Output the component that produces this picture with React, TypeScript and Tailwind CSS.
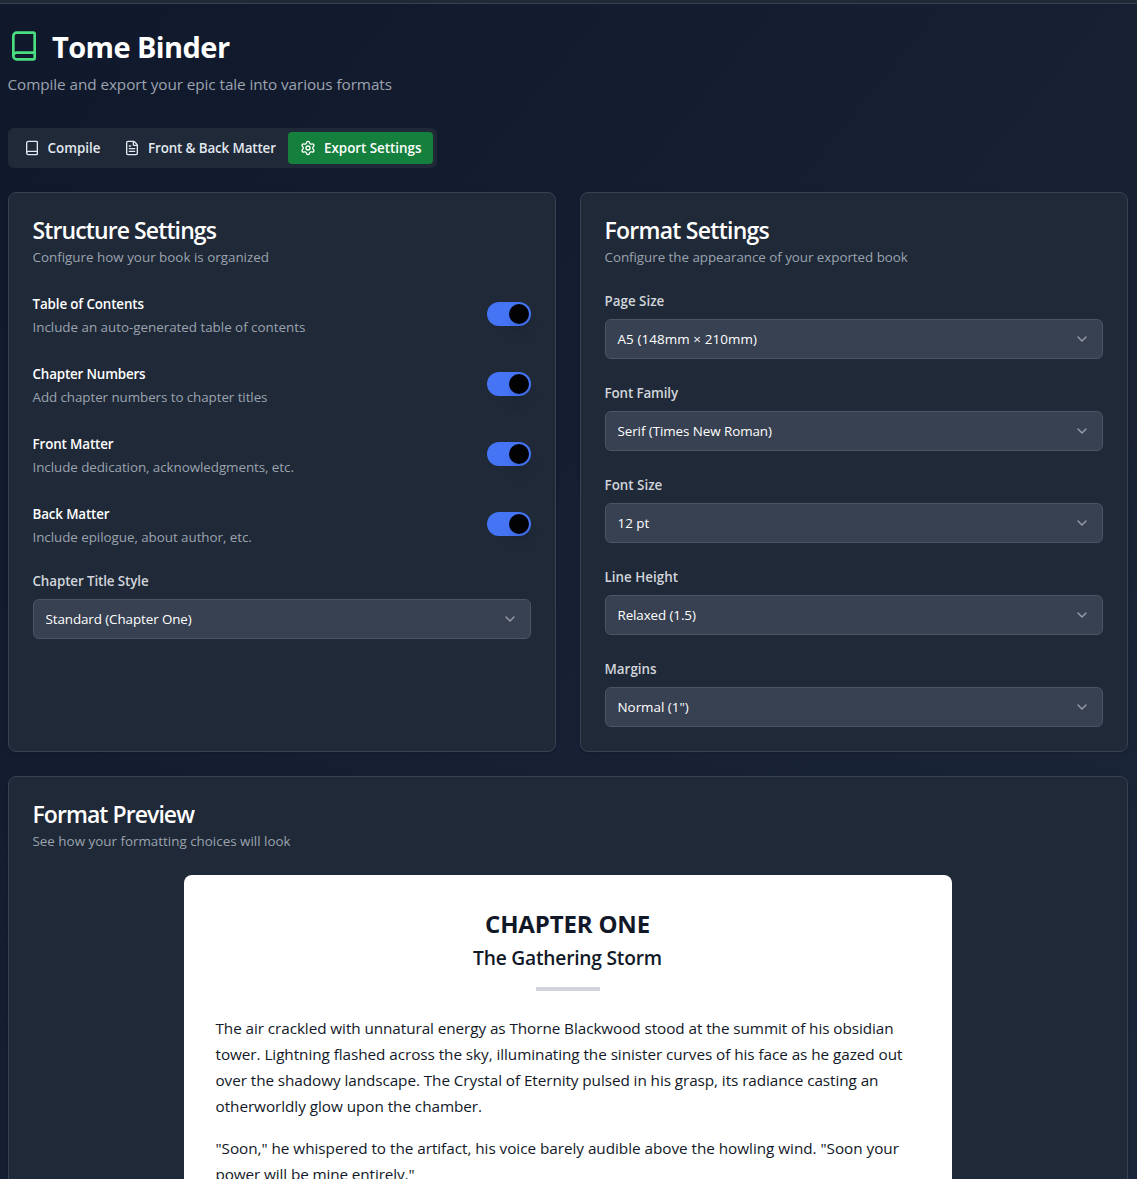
import type { ReactNode } from "react";
import { Book, ChevronDown, FileText, Settings } from "lucide-react";

type Item = { text: string; tracking: string };
type ToggleItem = { label: Item; hint: Item };
type SelectItem = { label: Item; value: Item };

const toggles: ToggleItem[] = [
  {
    label: { text: "Table of Contents", tracking: "tracking-[-0.13px]" },
    hint: { text: "Include an auto-generated table of contents", tracking: "tracking-[-0.02px]" },
  },
  {
    label: { text: "Chapter Numbers", tracking: "tracking-[-0.17px]" },
    hint: { text: "Add chapter numbers to chapter titles", tracking: "tracking-[-0.076px]" },
  },
  {
    label: { text: "Front Matter", tracking: "tracking-[-0.13px]" },
    hint: { text: "Include dedication, acknowledgments, etc.", tracking: "tracking-[-0.065px]" },
  },
  {
    label: { text: "Back Matter", tracking: "tracking-[-0.15px]" },
    hint: { text: "Include epilogue, about author, etc.", tracking: "tracking-[-0.05px]" },
  },
];

const formatFields: SelectItem[] = [
  {
    label: { text: "Page Size", tracking: "tracking-normal" },
    value: { text: "A5 (148mm × 210mm)", tracking: "tracking-[0.1px]" },
  },
  {
    label: { text: "Font Family", tracking: "tracking-[-0.13px]" },
    value: { text: "Serif (Times New Roman)", tracking: "tracking-[-0.07px]" },
  },
  {
    label: { text: "Font Size", tracking: "tracking-normal" },
    value: { text: "12 pt", tracking: "tracking-normal" },
  },
  {
    label: { text: "Line Height", tracking: "tracking-normal" },
    value: { text: "Relaxed (1.5)", tracking: "tracking-[-0.1px]" },
  },
  {
    label: { text: "Margins", tracking: "tracking-normal" },
    value: { text: 'Normal (1")', tracking: "tracking-normal" },
  },
];

const paragraphs: Item[][] = [
  [
    {
      text: "The air crackled with unnatural energy as Thorne Blackwood stood at the summit of his obsidian",
      tracking: "tracking-[-0.079px]",
    },
    {
      text: "tower. Lightning flashed across the sky, illuminating the sinister curves of his face as he gazed out",
      tracking: "tracking-[-0.062px]",
    },
    {
      text: "over the shadowy landscape. The Crystal of Eternity pulsed in his grasp, its radiance casting an",
      tracking: "tracking-[-0.078px]",
    },
    { text: "otherworldly glow upon the chamber.", tracking: "tracking-[-0.053px]" },
  ],
  [
    {
      text: '"Soon," he whispered to the artifact, his voice barely audible above the howling wind. "Soon your',
      tracking: "tracking-[-0.038px]",
    },
    { text: 'power will be mine entirely."', tracking: "tracking-[-0.114px]" },
  ],
];

function Card({ title, hint, children }: { title: Item; hint: Item; children: ReactNode }) {
  return (
    <section className="rounded-lg border border-[#374151] bg-[#1f2937] p-6 shadow-sm">
      <h2
        className={`-ml-[0.5px] h-6 text-[23px] leading-[27px] font-semibold whitespace-nowrap text-white ${title.tracking}`}
      >
        {title.text}
      </h2>
      <p className={`mt-1.5 -ml-[0.5px] text-[13.4px] leading-5 whitespace-nowrap text-[#9ca3af] ${hint.tracking}`}>
        {hint.text}
      </p>
      <div className="mt-6">{children}</div>
    </section>
  );
}

function Toggle({ label, hint }: ToggleItem) {
  return (
    <div className="flex items-center justify-between">
      <div className="-ml-[0.5px] space-y-0.5">
        <div className={`h-6 text-[13.4px] leading-[26px] font-semibold text-white ${label.tracking}`}>
          {label.text}
        </div>
        <p className={`text-[13.4px] leading-5 text-[#9ca3af] ${hint.tracking}`}>{hint.text}</p>
      </div>
      <button
        role="switch"
        aria-checked="true"
        className="flex h-6 w-11 items-center justify-end rounded-full border-2 border-transparent bg-[#4574f5]"
      >
        <span className="size-5 rounded-full bg-[#020205] shadow-lg" />
      </button>
    </div>
  );
}

function SelectField({ label, value }: SelectItem) {
  return (
    <div>
      <div className={`-ml-[0.5px] text-[13.4px] leading-5 font-semibold text-[#d1d5db] ${label.tracking}`}>
        {label.text}
      </div>
      <button className="mt-2 flex h-10 w-full items-center justify-between rounded-md border border-[#4b5563] bg-[#374151] px-3">
        <span className={`-ml-[0.5px] text-[13.4px] leading-5 text-white ${value.tracking}`}>{value.text}</span>
        <ChevronDown className="size-4 text-white opacity-50" />
      </button>
    </div>
  );
}

export default function App() {
  return (
    <div className="h-[1179px] overflow-hidden bg-[#0f172a] font-['Open_Sans',sans-serif] text-white">
      <div className="h-1 border-b border-[#374151] bg-[#1f2937]" />
      <main className="h-[1400px] bg-linear-to-br from-[#10182b] to-[#1d283c] pt-6 pl-2">
        <header>
          <div className="flex h-9 items-center">
            <Book className="mr-3 size-8 text-[#4ade80]" />
            <h1 className="pt-0.5 text-[29px] leading-9 font-bold tracking-[-0.587px]">Tome Binder</h1>
          </div>
          <p className="mt-2 -ml-[0.5px] text-[15.3px] leading-6 tracking-[-0.078px] text-[#9ca3af]">
            Compile and export your epic tale into various formats
          </p>
        </header>

        <nav className="mt-8 flex h-10 w-[429px] items-center rounded-md bg-[#1f2937] p-1 text-[13.4px] leading-5 font-semibold whitespace-nowrap">
          <button className="flex h-8 w-[100px] items-center rounded-sm px-3 text-[#e2e8f0]">
            <Book className="mr-2 size-4 shrink-0" />
            <span className="-ml-[0.5px]">Compile</span>
          </button>
          <button className="flex h-8 w-[176px] items-center rounded-sm px-3 text-[#e2e8f0]">
            <FileText className="mr-2 size-4 shrink-0" />
            <span className="tracking-[-0.13px]">Front &amp; Back Matter</span>
          </button>
          <button className="flex h-8 w-[145px] items-center rounded-sm bg-[#15803d] px-3 text-white">
            <Settings className="mr-2 size-4 shrink-0" />
            <span className="tracking-[-0.02px]">Export Settings</span>
          </button>
        </nav>

        <div className="mt-6 grid w-[1120px] grid-cols-2 gap-6">
          <Card
            title={{ text: "Structure Settings", tracking: "tracking-[-0.895px]" }}
            hint={{ text: "Configure how your book is organized", tracking: "tracking-normal" }}
          >
            <div className="space-y-6">
              {toggles.map((t) => (
                <Toggle key={t.label.text} {...t} />
              ))}
              <SelectField
                label={{ text: "Chapter Title Style", tracking: "tracking-[-0.115px]" }}
                value={{ text: "Standard (Chapter One)", tracking: "tracking-[-0.09px]" }}
              />
            </div>
          </Card>
          <Card
            title={{ text: "Format Settings", tracking: "tracking-[-0.744px]" }}
            hint={{ text: "Configure the appearance of your exported book", tracking: "tracking-[-0.045px]" }}
          >
            <div className="space-y-6">
              {formatFields.map((f) => (
                <SelectField key={f.label.text} {...f} />
              ))}
            </div>
          </Card>
          <div className="col-span-2">
            <Card
              title={{ text: "Format Preview", tracking: "tracking-[-0.936px]" }}
              hint={{ text: "See how your formatting choices will look", tracking: "tracking-normal" }}
            >
              <article className="mx-auto w-3xl rounded-lg bg-white p-8 text-[#111827]">
                <div className="text-center">
                  <h3 className="-ml-px pt-0.5 text-2xl leading-[30px] font-bold tracking-[-0.0067em]">CHAPTER ONE</h3>
                  <h4 className="mt-1 -ml-px h-7 text-[19.2px] leading-[30px] font-semibold tracking-[-0.21px]">
                    The Gathering Storm
                  </h4>
                  <div className="mx-auto mt-4 h-1 w-16 bg-[#d1d5db]" />
                </div>
                <div className="mt-6 -ml-[0.5px] space-y-4 text-[15.3px] leading-[26px] whitespace-nowrap">
                  {paragraphs.map((lines) => (
                    <p key={lines[0].text}>
                      {lines.map((l) => (
                        <span key={l.text} className={`block ${l.tracking}`}>
                          {l.text}
                        </span>
                      ))}
                    </p>
                  ))}
                </div>
              </article>
            </Card>
          </div>
        </div>
      </main>
    </div>
  );
}
